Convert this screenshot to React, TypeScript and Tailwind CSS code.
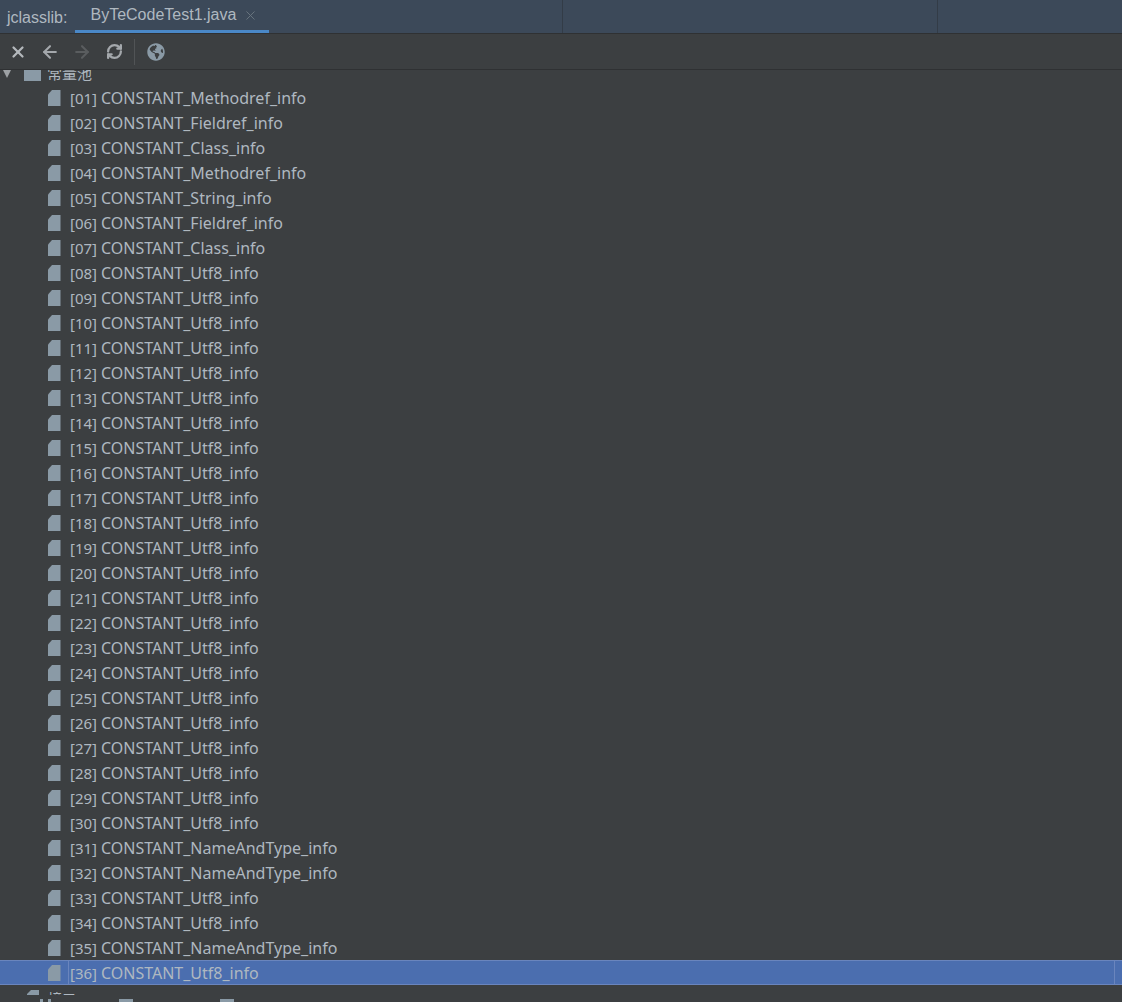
import { ArrowLeft, ArrowRight, X } from "lucide-react";
import { FaGlobeAmericas } from "react-icons/fa";
import { LuRefreshCw } from "react-icons/lu";

const ROWS: string[] = [
  "Methodref", "Fieldref", "Class", "Methodref", "String", "Fieldref", "Class",
  ...Array(23).fill("Utf8"),
  "NameAndType", "NameAndType", "Utf8", "Utf8", "NameAndType", "Utf8",
];

function FileIcon() {
  return (
    <svg width="14" height="18" viewBox="0 0 14 18" className="mb-[2px] shrink-0">
      <path d="M5 1h8.5v16H1V5.5z" fill="#8a9aa6" />
    </svg>
  );
}

function ToolButton({ children }: { children: React.ReactNode }) {
  return <div className="flex h-[32px] w-[32px] items-center justify-center">{children}</div>;
}

function Row({ index, type, selected }: { index: number; type: string; selected: boolean }) {
  const num = String(index).padStart(2, "0");
  return (
    <div className={`flex h-[25px] items-center pl-[47px] ${selected ? "relative -mt-px mb-px border-y border-[#6a85bd] bg-[#4b6eaf] pt-[3px]" : ""}`}>
      <FileIcon />
      <span className="mb-[2px] ml-[9px] text-[16px] text-[#afb8c0]">
        <span className="text-[15px]">[{num}] </span>CONSTANT_{type}_info
      </span>
      {selected && <div className="absolute top-0 bottom-0 left-[68px] w-px bg-[#6a85bd]" />}
      {selected && <div className="absolute top-0 right-[7px] bottom-0 w-px bg-[#6a85bd]" />}
    </div>
  );
}

export default function App() {
  return (
    <div className="flex h-[1002px] w-[1122px] flex-col overflow-hidden bg-[#3c3f41] font-['Noto_Sans',sans-serif]">
      <div className="flex h-[34px] shrink-0 border-b border-[#2f3133] bg-[#3c4959] font-['Liberation_Sans',sans-serif]">
        <span className="ml-[7px] pt-[8px] text-[16px] leading-[20px] text-[#afb8c0]">jclasslib:</span>
        <div className="ml-[8px] flex h-[33px] w-[194px] items-center border-b-[3px] border-[#4a88c7] pl-[15px]">
          <span className="text-[16px] text-[#afb8c0]">ByTeCodeTest1.java</span>
          <X size={15} strokeWidth={1.5} className="ml-[7px] text-[#6b7680]" />
        </div>
        <div className="ml-[293px] w-px bg-[#333c47]" />
        <div className="ml-[374px] w-px bg-[#333c47]" />
      </div>

      <div className="flex h-[36px] shrink-0 items-center border-b border-[#2f3133] pl-[2px]">
        <ToolButton><X size={18} strokeWidth={3} className="text-[#b4b8bc]" /></ToolButton>
        <ToolButton><ArrowLeft size={20} strokeWidth={2.5} className="text-[#a4a8ac]" /></ToolButton>
        <ToolButton><ArrowRight size={20} strokeWidth={2.5} className="text-[#5a5d5f]" /></ToolButton>
        <ToolButton><LuRefreshCw size={17} strokeWidth={3.2} className="text-[#a4a8ac]" /></ToolButton>
        <div className="ml-[4px] h-[26px] w-px bg-[#515456]" />
        <div className="ml-[5px] flex h-[32px] w-[32px] items-center justify-center">
          <FaGlobeAmericas size={18} className="text-[#8a9aa6]" />
        </div>
      </div>

      <div className="min-h-0 flex-1 overflow-hidden">
        <div className="-mt-[9px] flex h-[25px] items-center pl-[3px]">
          <span className="h-0 w-0 border-x-[4px] border-t-[8px] border-x-transparent border-t-[#9da1a4]" />
          <span className="ml-[13px] h-[14px] w-[17px] bg-[#8a9aa6]" />
          <span className="ml-[6px] font-['Noto_Sans_CJK_SC',sans-serif] text-[15px] text-[#afb8c0]">常量池</span>
        </div>
        {ROWS.map((type, i) => (
          <Row key={i} index={i + 1} type={type} selected={i === ROWS.length - 1} />
        ))}
        <div className="flex h-[25px] items-center pl-[27px]">
          <svg width="12" height="16" viewBox="0 0 12 16" className="mt-[4px] shrink-0 self-start">
            <path d="M4 0h8v16H0V4z" fill="#8a9aa6" />
          </svg>
          <span className="ml-[9px] font-['Noto_Sans_CJK_SC',sans-serif] text-[14px] text-[#afb8c0]">接口</span>
        </div>
      </div>

      <div className="flex h-[7px] shrink-0 items-start overflow-hidden pt-[4px]">
        <span className="ml-[40px] h-[6px] w-[3px] bg-[#8a9aa6]" />
        <span className="ml-[5px] h-[6px] w-[3px] bg-[#8a9aa6]" />
        <span className="ml-[68px] h-[6px] w-[14px] bg-[#8a9aa6]" />
        <span className="ml-[87px] h-[6px] w-[14px] bg-[#8a9aa6]" />
      </div>
    </div>
  );
}
